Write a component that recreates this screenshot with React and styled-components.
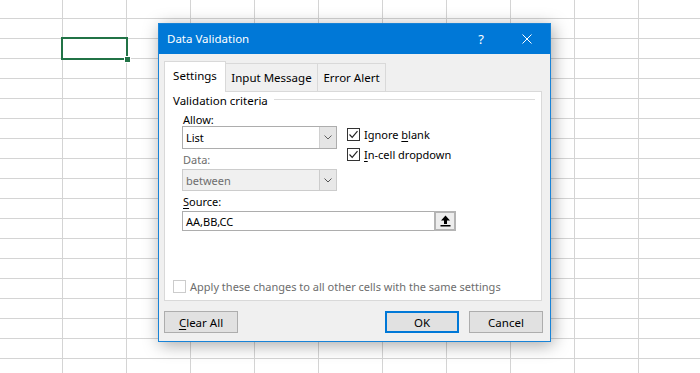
import React from 'react'
import styled, { createGlobalStyle } from 'styled-components'

const GlobalStyle = createGlobalStyle`
  html, body {
    margin: 0;
    padding: 0;
  }
  body {
    font-family: 'Noto Sans', 'Open Sans', sans-serif;
    font-size: 11px;
    color: #000;
  }
`

const Sheet = styled.div`
  position: relative;
  width: 700px;
  height: 373px;
  overflow: hidden;
  background-color: #fff;
  background-image:
    linear-gradient(to right, #d4d4d4 1px, transparent 1px),
    linear-gradient(to bottom, #d4d4d4 1px, transparent 1px);
  background-size: 64px 100%, 100% 20px;
  background-position: 62px 0, 0 18px;
`

const ActiveCell = styled.div`
  position: absolute;
  left: 61px;
  top: 37px;
  width: 63px;
  height: 19px;
  border: 2px solid #217346;
`

const FillHandle = styled.div`
  position: absolute;
  right: -5px;
  bottom: -5px;
  width: 5px;
  height: 5px;
  background: #217346;
  border: 1px solid #fff;
`

const Dialog = styled.div`
  position: absolute;
  left: 158px;
  top: 23px;
  width: 391px;
  height: 317px;
  border: 1px solid #1883d7;
  background: #f0f0f0;
  box-shadow: 2px 3px 16px rgba(0, 0, 0, 0.35);
  display: flex;
  flex-direction: column;
`

const TitleBar = styled.div`
  height: 30px;
  background: #0078d7;
  color: #fff;
  display: flex;
  align-items: center;
  padding-left: 8px;
`

const Title = styled.div`
  flex: 1;
  font-size: 11.5px;
  line-height: 16px;
`

const TitleButton = styled.div`
  width: 46px;
  height: 30px;
  display: flex;
  align-items: center;
  justify-content: center;
  font-size: 13px;
`

const Tabs = styled.div`
  display: flex;
  align-items: flex-end;
  height: 30px;
  margin-top: 7px;
  padding-left: 5px;
`

const Tab = styled.div`
  box-sizing: border-box;
  width: ${p => p.$w}px;
  height: ${p => (p.$active ? 31 : 28)}px;
  margin-left: ${p => (p.$first ? 0 : -1)}px;
  margin-bottom: ${p => (p.$active ? -1 : 0)}px;
  background: ${p => (p.$active ? '#fff' : '#f0f0f0')};
  border: 1px solid #d9d9d9;
  border-bottom: none;
  position: relative;
  z-index: ${p => (p.$active ? 2 : 1)};
  display: flex;
  align-items: center;
  justify-content: center;
  padding-bottom: ${p => (p.$active ? 2 : 0)}px;
  line-height: 16px;
  font-size: 11.5px;
`

const Panel = styled.div`
  box-sizing: border-box;
  margin-left: 5px;
  width: 378px;
  height: 210px;
  background: #fff;
  border: 1px solid #d9d9d9;
  display: flex;
  flex-direction: column;
  padding: 0 0 7px 8px;
`

const GroupHeader = styled.div`
  display: flex;
  align-items: center;
  height: 16px;
  gap: 6px;
  padding-right: 6px;
  font-size: 11.5px;
`

const GroupLine = styled.div`
  flex: 1;
  height: 1px;
  background: #dcdcdc;
  margin-top: -2px;
`

const Criteria = styled.div`
  padding-left: 9px;
  margin-top: 5px;
`

const TopRow = styled.div`
  display: flex;
  gap: 10px;
`

const LeftCol = styled.div`
  display: flex;
  flex-direction: column;
  width: 155px;
`

const RightCol = styled.div`
  display: flex;
  flex-direction: column;
  gap: 7px;
  margin-top: 15px;
`

const Label = styled.div`
  height: 13px;
  line-height: 13px;
  margin-top: ${p => p.$mt || 0}px;
  margin-left: 1px;
  color: ${p => (p.$disabled ? '#6d6d6d' : '#000')};
`

const Select = styled.div`
  box-sizing: border-box;
  display: flex;
  height: ${p => p.$h}px;
  margin-top: ${p => p.$mt}px;
  border: 1px solid ${p => (p.$disabled ? '#cccccc' : '#adadad')};
  background: ${p => (p.$disabled ? '#f0f0f0' : '#fff')};
  color: ${p => (p.$disabled ? '#6d6d6d' : '#000')};
`

const SelectValue = styled.div`
  flex: 1;
  display: flex;
  align-items: center;
  padding-left: 3px;
`

const SelectArrow = styled.div`
  width: 16px;
  display: flex;
  align-items: center;
  justify-content: center;
  background: ${p => (p.$disabled ? '#e8e8e8' : '#e5e5e5')};
  border-left: 1px solid ${p => (p.$disabled ? '#cccccc' : '#d0d0d0')};
`

const CheckRow = styled.label`
  display: flex;
  align-items: center;
  gap: 4px;
  height: 13px;
  color: ${p => (p.$disabled ? '#6d6d6d' : '#000')};
`

const Box = styled.span`
  box-sizing: border-box;
  width: 13px;
  height: 13px;
  border: 1px solid ${p => (p.$disabled ? '#cccccc' : '#333333')};
  background: #fff;
  display: flex;
  align-items: center;
  justify-content: center;
`

const SourceField = styled.div`
  box-sizing: border-box;
  display: flex;
  width: 274px;
  height: 20px;
  margin-top: 3px;
  border: 1px solid #adadad;
  background: #fff;
`

const SourceValue = styled.div`
  flex: 1;
  display: flex;
  align-items: center;
  padding-left: 3px;
`

const PickButton = styled.div`
  box-sizing: border-box;
  width: 22px;
  margin: -1px -1px -1px 0;
  border: 2px solid #b4b4b4;
  background: #ededed;
  display: flex;
  align-items: center;
  justify-content: center;
`

const ApplyRow = styled.div`
  margin-top: auto;
`

const Footer = styled.div`
  display: flex;
  margin-top: 10px;
  padding: 0 7px 0 5px;
`

const Button = styled.div`
  box-sizing: border-box;
  width: 74px;
  height: 22px;
  margin-left: ${p => p.$ml || 0}px;
  background: #e1e1e1;
  border: ${p => (p.$default ? '2px solid #0078d7' : '1px solid #adadad')};
  display: flex;
  align-items: center;
  justify-content: center;
  font-size: 11.5px;
`

const Key = styled.span`
  text-decoration: underline;
  text-underline-offset: 2px;
`

const Chevron = ({ color }) => (
  <svg width="8" height="5" viewBox="0 0 8 5">
    <polyline points="0.5,0.5 4,4 7.5,0.5" fill="none" stroke={color} strokeWidth="1" />
  </svg>
)

const Check = () => (
  <svg width="11" height="11" viewBox="0 0 11 11">
    <polyline points="1.5,5.5 4.2,8.3 9.5,2.2" fill="none" stroke="#222" strokeWidth="1.2" />
  </svg>
)

const UpArrow = () => (
  <svg width="11" height="12" viewBox="0 0 11 12">
    <polygon points="5.5,0.5 10,5.5 7,5.5 7,9 4,9 4,5.5 1,5.5" fill="#000" />
    <rect x="0.5" y="10" width="10" height="1.5" fill="#000" />
  </svg>
)

const CloseIcon = () => (
  <svg width="10" height="10" viewBox="0 0 10 10">
    <path d="M0.5 0.5 L9.5 9.5 M9.5 0.5 L0.5 9.5" stroke="#fff" strokeWidth="1" />
  </svg>
)

export default function App() {
  return (
    <Sheet>
      <GlobalStyle />
      <ActiveCell>
        <FillHandle />
      </ActiveCell>
      <Dialog>
        <TitleBar>
          <Title>Data Validation</Title>
          <TitleButton>?</TitleButton>
          <TitleButton>
            <CloseIcon />
          </TitleButton>
        </TitleBar>
        <Tabs>
          <Tab $active $first $w={62}>Settings</Tab>
          <Tab $w={93}>Input Message</Tab>
          <Tab $w={69}>Error Alert</Tab>
        </Tabs>
        <Panel>
          <GroupHeader>
            <span>Validation criteria</span>
            <GroupLine />
          </GroupHeader>
          <Criteria>
            <TopRow>
              <LeftCol>
                <Label>
                  <Key>A</Key>llow:
                </Label>
                <Select $h={23} $mt={0}>
                  <SelectValue>List</SelectValue>
                  <SelectArrow>
                    <Chevron color="#606060" />
                  </SelectArrow>
                </Select>
                <Label $mt={4} $disabled>
                  Data:
                </Label>
                <Select $h={22} $mt={3} $disabled>
                  <SelectValue>between</SelectValue>
                  <SelectArrow $disabled>
                    <Chevron color="#555" />
                  </SelectArrow>
                </Select>
              </LeftCol>
              <RightCol>
                <CheckRow>
                  <Box>
                    <Check />
                  </Box>
                  <span>
                    Ignore <Key>b</Key>lank
                  </span>
                </CheckRow>
                <CheckRow>
                  <Box>
                    <Check />
                  </Box>
                  <span>
                    <Key>I</Key>n-cell dropdown
                  </span>
                </CheckRow>
              </RightCol>
            </TopRow>
            <Label $mt={4}>
              <Key>S</Key>ource:
            </Label>
            <SourceField>
              <SourceValue>AA,BB,CC</SourceValue>
              <PickButton>
                <UpArrow />
              </PickButton>
            </SourceField>
          </Criteria>
          <ApplyRow>
            <CheckRow $disabled>
              <Box $disabled />
              <span>Apply these changes to all other cells with the same settings</span>
            </CheckRow>
          </ApplyRow>
        </Panel>
        <Footer>
          <Button>
            <span>
              <Key>C</Key>lear All
            </span>
          </Button>
          <Button $default $ml={147}>
            OK
          </Button>
          <Button $ml={10}>Cancel</Button>
        </Footer>
      </Dialog>
    </Sheet>
  )
}
